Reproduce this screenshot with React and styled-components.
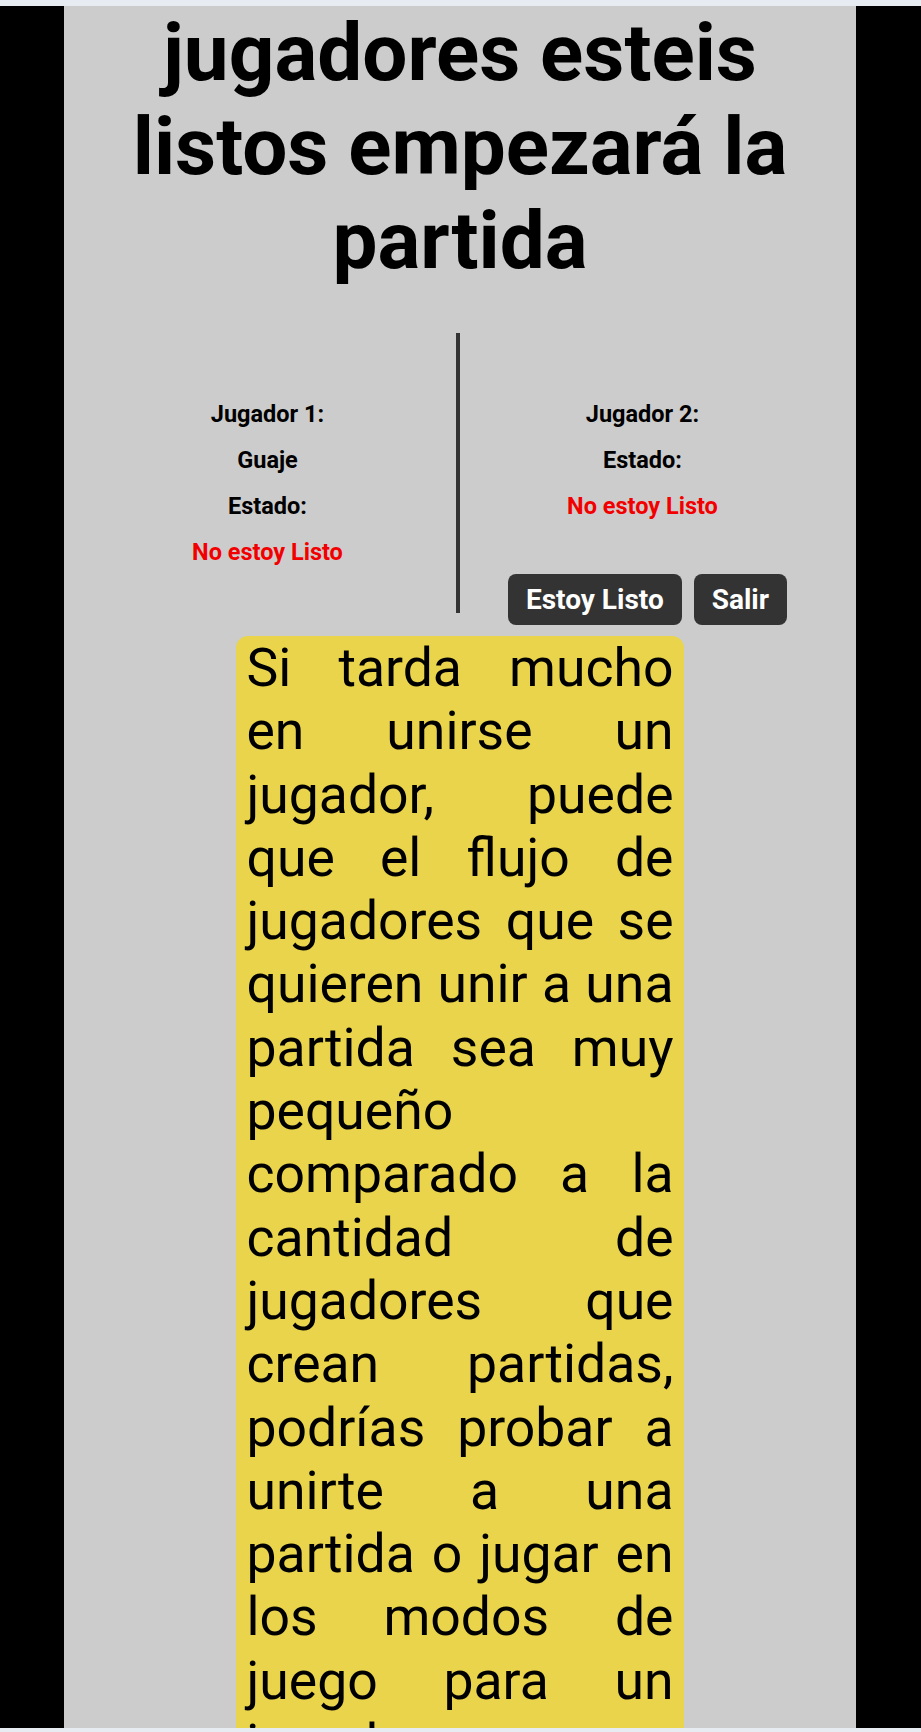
import React from 'react';
import styled, { createGlobalStyle } from 'styled-components';

const GlobalStyle = createGlobalStyle`
  html, body {
    margin: 0;
    padding: 0;
    background: #000;
    font-family: Roboto, "Liberation Sans", sans-serif;
  }
`;

const jugadores = [
  { titulo: 'Jugador 1:', nombre: 'Guaje', listo: false },
  { titulo: 'Jugador 2:', nombre: null, listo: false },
];

const aviso =
  'Si tarda mucho en unirse un jugador, puede que el flujo de jugadores que se quieren unir a una partida sea muy pequeño comparado a la cantidad de jugadores que crean partidas, podrías probar a unirte a una partida o jugar en los modos de juego para un jugador.';

class App extends React.Component {
  render() {
    return (
      <Screen>
        <GlobalStyle />
        <Strip $h={6} />
        <Stage>
          <Sala>
            <Titulo>jugadores esteis listos empezará la partida</Titulo>
            <Jugadores>
              <Columna>
                <Linea>{jugadores[0].titulo}</Linea>
                <Linea>{jugadores[0].nombre}</Linea>
                <Linea>Estado:</Linea>
                <Linea $rojo>No estoy Listo</Linea>
              </Columna>
              <Separador />
              <Columna>
                <Linea>{jugadores[1].titulo}</Linea>
                <Linea>Estado:</Linea>
                <Linea $rojo>No estoy Listo</Linea>
                <Botones>
                  <Boton>Estoy Listo</Boton>
                  <Boton>Salir</Boton>
                </Botones>
              </Columna>
            </Jugadores>
            <Aviso>{aviso}</Aviso>
          </Sala>
        </Stage>
        <Strip $h={4} />
      </Screen>
    );
  }
}

const Screen = styled.div`
  height: 1732px;
  display: flex;
  flex-direction: column;
  overflow: hidden;
`;

const Strip = styled.div`
  height: ${(p) => p.$h}px;
  flex: none;
  background: #e6ecf2;
`;

const Stage = styled.div`
  flex: 1;
  min-height: 0;
  overflow: hidden;
  display: grid;
  grid-template-columns: 64px 792px 65px;
  background: #000;
`;

const Sala = styled.div`
  grid-column: 2;
  background: #cccccc;
  color: #000;
`;

const Titulo = styled.h1`
  margin: 0;
  font-size: 80px;
  font-weight: 700;
  line-height: normal;
  text-align: center;
`;

const Jugadores = styled.div`
  margin-top: 45px;
  padding-left: 15px;
  display: grid;
  grid-template-columns: 377px 4px 365px;
  align-items: start;
`;

const Columna = styled.div`
  margin-top: 58px;
  display: flex;
  flex-direction: column;
  align-items: center;
`;

const Linea = styled.p`
  margin: 0;
  font-size: 23.5px;
  font-weight: 700;
  line-height: 46px;
  color: ${(p) => (p.$rojo ? '#f20000' : '#000')};
`;

const Separador = styled.div`
  width: 4px;
  height: 280px;
  background: #333;
`;

const Botones = styled.div`
  margin-top: 45px;
  margin-left: 10px;
  display: flex;
  gap: 12px;
`;

const Boton = styled.button`
  padding: 9px 18px;
  border: none;
  border-radius: 8px;
  background: #333;
  color: #fff;
  font-family: Roboto, "Liberation Sans", sans-serif;
  font-size: 28px;
  font-weight: 700;
  line-height: normal;
`;

const Aviso = styled.p`
  width: 427px;
  margin: 11px auto 0;
  padding: 0 10.5px;
  background: #e9d44c;
  border-radius: 12px;
  font-size: 53.5px;
  line-height: 63.3px;
  text-align: justify;
  color: #000;
`;

export default App;
